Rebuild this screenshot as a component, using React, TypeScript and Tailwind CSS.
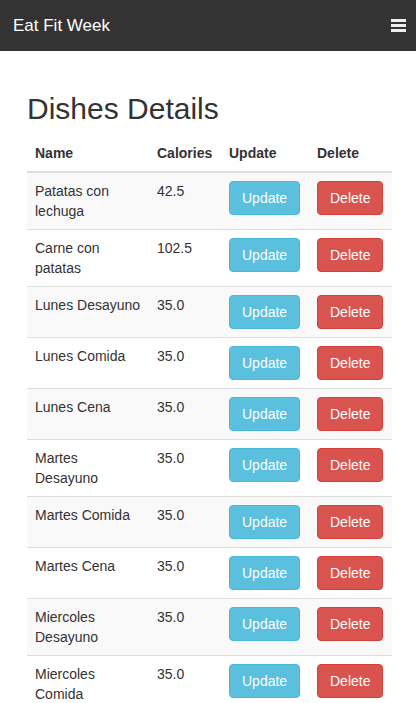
import React from "react";

type Dish = { name: string; calories: string };

const dishes: Dish[] = [
  { name: "Patatas con lechuga", calories: "42.5" },
  { name: "Carne con patatas", calories: "102.5" },
  { name: "Lunes Desayuno", calories: "35.0" },
  { name: "Lunes Comida", calories: "35.0" },
  { name: "Lunes Cena", calories: "35.0" },
  { name: "Martes Desayuno", calories: "35.0" },
  { name: "Martes Comida", calories: "35.0" },
  { name: "Martes Cena", calories: "35.0" },
  { name: "Miercoles Desayuno", calories: "35.0" },
  { name: "Miercoles Comida", calories: "35.0" },
];

const App = () => {
  return (
    <div
      className="min-h-screen bg-white text-[#333] text-[14px] leading-[20px]"
      style={{ fontFamily: '"Liberation Sans", Arial, sans-serif' }}
    >
      <nav className="flex h-[51px] items-center justify-between bg-[#333] pl-[13px] pr-[10px]">
        <span className="text-[17px] leading-[20px] text-white">Eat Fit Week</span>
        <button className="flex w-[15px] flex-col gap-[2px] py-[2px]">
          <span className="block h-[3px] w-full bg-[#eee]"></span>
          <span className="block h-[3px] w-full bg-[#eee]"></span>
          <span className="block h-[3px] w-full bg-[#eee]"></span>
        </button>
      </nav>

      <div className="pl-[27px] pr-[24px] pt-[41px]">
        <h2 className="mb-[10px] text-[30px] leading-[33px] font-normal">Dishes Details</h2>
        <table className="w-full table-fixed border-collapse">
          <thead>
            <tr className="border-b-2 border-[#ddd] text-left">
              <th className="w-[122px] p-[8px] align-bottom font-bold">Name</th>
              <th className="w-[72px] p-[8px] align-bottom font-bold">Calories</th>
              <th className="w-[88px] p-[8px] align-bottom font-bold">Update</th>
              <th className="p-[8px] align-bottom font-bold">Delete</th>
            </tr>
          </thead>
          <tbody>
            {dishes.map((d, i) => (
              <tr
                key={d.name}
                className={`border-t border-[#ddd] ${i % 2 === 0 ? "bg-[#f9f9f9]" : "bg-white"}`}
              >
                <td className="p-[8px] align-top">{d.name}</td>
                <td className="p-[8px] align-top">{d.calories}</td>
                <td className="p-[8px] align-top">
                  <button className="h-[34px] rounded-[4px] border border-[#46b8da] bg-[#5bc0de] px-[12px] text-white">
                    Update
                  </button>
                </td>
                <td className="p-[8px] align-top">
                  <button className="h-[34px] rounded-[4px] border border-[#d43f3a] bg-[#d9534f] px-[12px] text-white">
                    Delete
                  </button>
                </td>
              </tr>
            ))}
          </tbody>
        </table>
      </div>
    </div>
  );
};

export default App;
